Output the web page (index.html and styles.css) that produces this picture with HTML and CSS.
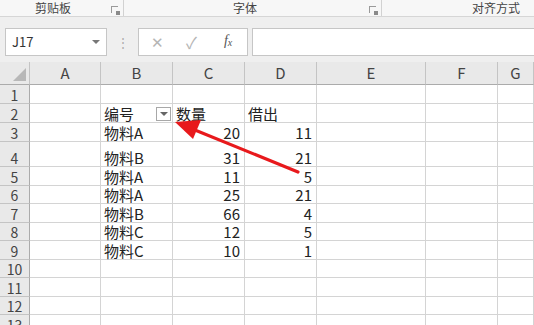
FILE: index.html
```html
<!DOCTYPE html>
<html lang="zh-CN">
<head>
  <meta charset="UTF-8" />
  <title>Excel 筛选</title>
  <link rel="stylesheet" href="styles.css">
</head>
<body>
  <div class="ribbon">
    <div class="group g1"><span>剪贴板</span><i class="launcher"></i></div>
    <div class="group g2"><span>字体</span><i class="launcher"></i></div>
    <div class="group g3"><span>对齐方式</span></div>
  </div>

  <div class="formula">
    <div class="namebox">J17<span class="caret"></span></div>
    <div class="dots">⋮</div>
    <div class="fxbox">
      <span class="ico x">✕</span>
      <span class="ico ok">✓</span>
      <span class="ico fx">f<sub>x</sub></span>
    </div>
    <div class="input"></div>
  </div>

  <div class="sheet" id="sheet"></div>

  <!-- 红色箭头 -->
  <svg class="arrow" width="534" height="325" viewBox="0 0 534 325">
    <line x1="298" y1="172" x2="190" y2="128" stroke="#e8191c" stroke-width="3.2" stroke-linecap="round"/>
    <polygon points="175,122 201,120 193,139" fill="#e8191c"/>
  </svg>

  <script>
    const cols = ['', 'A', 'B', 'C', 'D', 'E', 'F', 'G'];
    const data = {
      2: ['', '编号', '数量', '借出'],
      3: ['', '物料A', 20, 11],
      4: ['', '物料B', 31, 21],
      5: ['', '物料A', 11, 5],
      6: ['', '物料A', 25, 21],
      7: ['', '物料B', 66, 4],
      8: ['', '物料C', 12, 5],
      9: ['', '物料C', 10, 1]
    };
    const heights = [23, 19, 19, 19, 25, 19, 18, 19, 18, 19, 18, 19, 18, 19];
    const sheet = document.getElementById('sheet');

    let html = '';
    cols.forEach((c, i) => {
      html += i === 0 ? '<div class="hd corner"><i></i></div>' : `<div class="hd">${c}</div>`;
    });
    for (let r = 1; r <= 13; r++) {
      html += `<div class="rh"><span>${r}</span></div>`;
      const row = data[r] || [];
      for (let c = 0; c < 7; c++) {
        const v = row[c] === undefined ? '' : row[c];
        const num = typeof v === 'number' ? ' num' : '';
        const filter = r === 2 && c === 1 ? '<span class="filter"></span>' : '';
        html += `<div class="cell${num}"><span>${v}</span>${filter}</div>`;
      }
    }
    sheet.innerHTML = html;
    sheet.style.gridTemplateRows = heights.map(h => h + 'px').join(' ');
  </script>
</body>
</html>
```

FILE: styles.css
```css
body {
  margin: 0;
  width: 534px;
  height: 325px;
  overflow: hidden;
  background: #efefef;
  font-family: "Noto Sans CJK SC", "Liberation Sans", sans-serif;
  color: #222;
  position: relative;
}

/* 功能区标签 */
.ribbon {
  display: flex;
  height: 17px;
  background: #f7f7f7;
  border-bottom: 1px solid #d6d6d6;
  box-sizing: border-box;
  font-size: 12px;
  color: #444;
  line-height: 15px;
  white-space: nowrap;
}
.group { position: relative; box-sizing: border-box; border-right: 1px solid #d2d2d2; }
.g1 { width: 124px; padding-left: 35px; }
.g2 { width: 258px; padding-left: 109px; }
.g3 { flex: 1; border-right: none; padding-left: 90px; }
.launcher {
  position: absolute;
  right: 5px;
  top: 6px;
  width: 6px;
  height: 6px;
  border: 1px solid #9a9a9a;
  border-width: 1px 0 0 1px;
}
.launcher::after {
  content: "";
  position: absolute;
  right: -2px;
  bottom: -2px;
  width: 4px;
  height: 4px;
  background: #8a8a8a;
}

/* 编辑栏 */
.formula {
  display: flex;
  align-items: flex-start;
  height: 45px;
  padding-top: 11px;
  box-sizing: border-box;
}
.namebox {
  position: relative;
  margin-left: 5px;
  width: 102px;
  height: 28px;
  box-sizing: border-box;
  background: #fff;
  border: 1px solid #c6c6c6;
  font-size: 13px;
  line-height: 26px;
  padding-left: 6px;
  color: #333;
}
.caret {
  position: absolute;
  right: 6px;
  top: 11px;
  border-left: 4px solid transparent;
  border-right: 4px solid transparent;
  border-top: 4px solid #777;
}
.dots {
  width: 31px;
  text-align: center;
  color: #aaa;
  font-size: 12px;
  line-height: 28px;
}
.fxbox {
  display: flex;
  align-items: center;
  width: 110px;
  height: 28px;
  box-sizing: border-box;
  background: #fff;
  border: 1px solid #c6c6c6;
  margin-right: 4px;
}
.ico { color: #b5b5b5; font-size: 15px; line-height: 20px; }
.x { margin-left: 12px; }
.ok { margin-left: 22px; font-size: 16px; }
.fx {
  margin-left: 27px;
  color: #555;
  font-family: "Liberation Serif", serif;
  font-style: italic;
  font-size: 14px;
}
.fx sub { font-size: 10px; vertical-align: -1px; }
.input {
  flex: 1;
  height: 28px;
  box-sizing: border-box;
  background: #fff;
  border: 1px solid #c6c6c6;
  border-right: none;
}

/* 工作表 */
.sheet {
  display: grid;
  grid-template-columns: 30px 71px 72px 72px 72px 109px 72px 1fr;
  background: #fff;
  font-size: 15px;
  line-height: 16px;
}
.sheet > div {
  box-sizing: border-box;
  border-right: 1px solid #d4d4d4;
  border-bottom: 1px solid #d4d4d4;
  white-space: nowrap;
}
.hd, .rh {
  background: #e9e9e9;
  color: #444;
  text-align: center;
  border-color: #c4c4c4 !important;
}
.hd { line-height: 22px; border-bottom-color: #ababab !important; }
.rh {
  display: flex;
  align-items: flex-end;
  justify-content: center;
  font-size: 14px;
  border-right-color: #ababab !important;
}
.corner { position: relative; }
.corner i {
  position: absolute;
  right: 3px;
  bottom: 3px;
  border-left: 13px solid transparent;
  border-bottom: 13px solid #b8b8b8;
}
.cell {
  position: relative;
  display: flex;
  align-items: flex-end;
  padding: 0 3px;
}
.num { justify-content: flex-end; padding-right: 4px; }
.filter {
  position: absolute;
  right: 1px;
  top: 3px;
  width: 15px;
  height: 14px;
  box-sizing: border-box;
  border: 1px solid #a8a8a8;
  background: #fff;
}
.filter::after {
  content: "";
  position: absolute;
  left: 3px;
  top: 4px;
  border-left: 4px solid transparent;
  border-right: 4px solid transparent;
  border-top: 4px solid #666;
}

.arrow { position: absolute; left: 0; top: 0; pointer-events: none; }
```
